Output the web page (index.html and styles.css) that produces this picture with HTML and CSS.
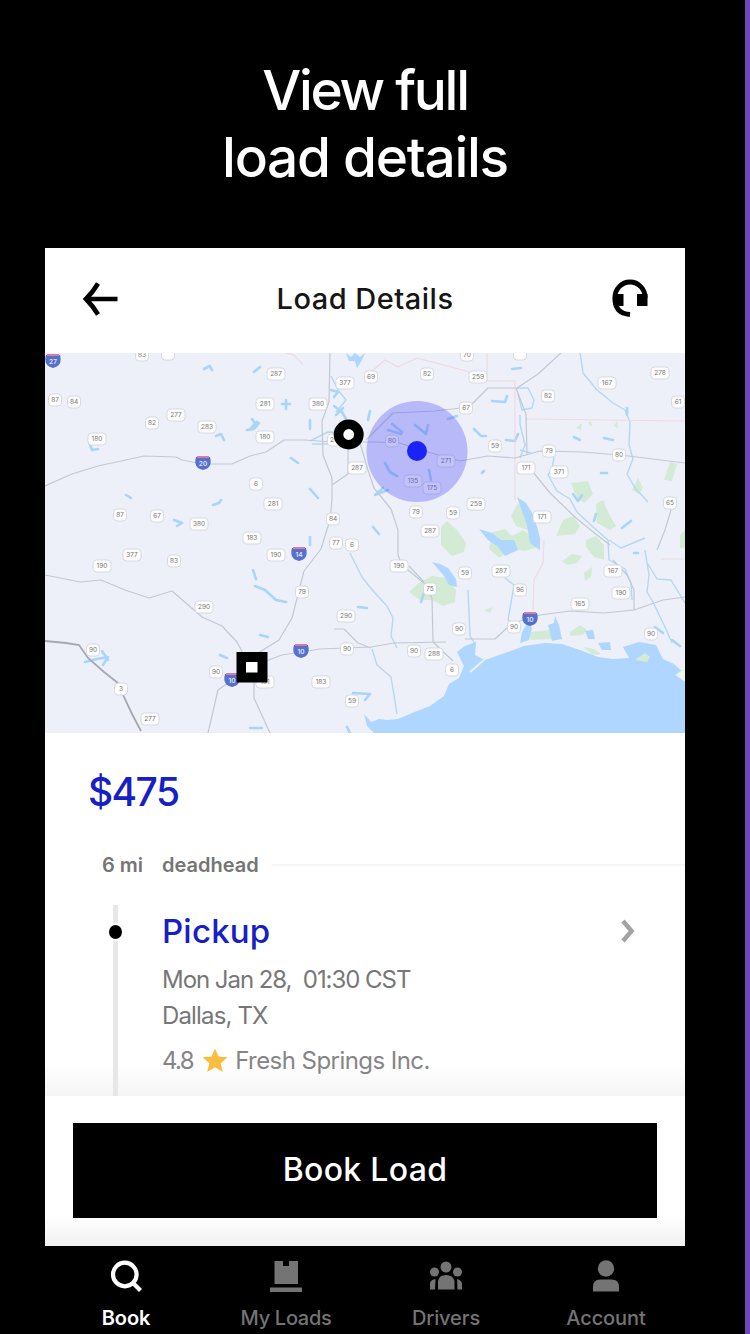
FILE: index.html
```
<!DOCTYPE html>
<html lang="en">
<head>
<meta charset="utf-8">
<title>Load Details</title>
<link rel="stylesheet" href="styles.css">
</head>
<body>
<div class="page">
  <h1 class="headline"><span class="headline-a">View full</span><br><span class="headline-b">load details</span></h1>

  <main class="card">
    <header class="topbar">
      <svg class="back" viewBox="0 0 36 34" width="36" height="34"><path d="M16 1.500Q11 10 4 17Q11 24 16 32.500M3 17H35.500" fill="none" stroke="#000" stroke-width="4.600"/></svg>
      <h2 class="title">Load Details</h2>
      <svg class="support" viewBox="0 0 36 40" width="36" height="40">
        <path d="M2.800 19A15.200 16 0 0 1 33.200 19M2.800 19Q2.800 34.500 18 35.500" fill="none" stroke="#000" stroke-width="4.800"/>
        <path d="M1 15H11.500V27H5Q1 24 1 15ZM25 15H35.500V27H25Z"/>
      </svg>
    </header>

    <svg class="map" viewBox="45 353 640 380" width="640" height="380">
      <rect x="45" y="352" width="640" height="381" fill="#edf0f9"/>
      <g fill="#d3ebd4">
        <path d="M441 527L447 521L458 531L466 543L464 552L452 556L441 545Z"/>
        <path d="M409 592L420 582L432 576L446 578L456 590L455 602L443 606L432 600L420 600Z"/>
        <path d="M517 505L522 501L530 520L528 530L516 526L511 516ZM492 532L505 529L512 536L523 530L538 540L538 547L525 551L512 549L499 558L489 549Z"/>
        <path d="M571 483L588 481L593 494L584 503L576 496ZM596 504L603 500L608 512L616 526L610 530L597 523ZM556 536L563 520L573 516L580 526L575 534ZM586 540L596 536L604 545L604 560L594 557L586 547Z"/>
        <path d="M562 561L572 554L582 556L577 563L567 565ZM584 573L592 567L591 577L585 581ZM664 480L670 462L677 464L672 481ZM632 490L638 478L643 488L639 494ZM680 535L685 530V548H680Z"/>
        <path d="M529 632L550 630L553 639L531 640ZM570 632L580 625L587 630L583 635L570 636ZM576 428L582 423L581 430ZM614 426L617 421L618 428ZM588 423L591 421L592 427ZM484 610L493 607L490 613Z"/>
      </g>
      <g fill="#aed6fe">
        <path d="M364 714L371 722L379 719L387 720L398 719L412 713L430 706L444 696L449 684L459 678L464 666L457 652L465 646L476 642L475 655L485 660L505 653L524 646L545 643L562 644L580 650L598 657L613 659L629 658L623 647L639 642L656 645L663 659L674 664L685 674V733H374L367 726Z"/>
        <path d="M517 497L526 503L534 516L540 538L540 550L530 543L527 525ZM479 529L492 533L501 540L514 540L518 550L505 556L497 546L488 540ZM432 562L440 564L448 568L456 579L457 587L449 585L444 576Z"/>
        <path d="M522 632L528 622L532 628L529 640L520 643ZM548 625L554 623L555 616L559 625L562 639L552 641ZM585 631L593 630L595 639L588 639ZM598 643L610 642L611 650L602 650ZM346 353L351 357L355 353L360 357L365 353L362 360L357 368L355 361L349 361Z"/>
      </g>
      <path d="M635 660L645 653L650 657L647 662ZM583 647L594 649L601 654L593 655Z" fill="#d3ebd4"/>
      <path d="M470 672L484 660M677 675L685 669L684 680Z" fill="#f0f4fb" stroke="#e9f4e4" stroke-width="2"/>
      <g class="lake">
        <path d="M204 369L210 366L212 370M254 372L260 367M247 430L254 429L259 423M216 436L221 434L224 440M90 445L92 450L98 449M126 495L131 498M213 505L219 503L221 500M174 520L182 523L177 526M252 419L257 426M286 400V409M282 404H290M251 428L257 422M331 390L338 392L334 397M334 406L342 412L346 419M336 415L343 408M370 411L368 420M310 420V429M291 458L298 463M310 489L318 498M373 527L379 534M310 537V545M253 570L256 579M255 586L265 590L276 600L286 602M260 635L268 637M358 607L367 608M388 430L401 434M392 424L402 432M415 425L426 434L428 425M385 463L390 472L397 476M429 470L431 480M383 488L375 495L388 490M448 419L457 416"/>
        <path d="M512 369L521 368M492 401L505 402L507 396M474 429L481 436L486 436M506 440L515 441L518 434M574 437L580 440M604 438L613 440M627 408V415M482 473L484 471M601 473H607M573 494L578 501L582 495M596 514L594 521M622 528L631 521M634 553H638M85 662L97 659L108 657L103 665M102 651L108 660M220 655L227 658M250 728H262M353 693L370 694L365 700M347 727L350 733M421 602L425 590M655 627L663 633M672 640L680 646"/>
      </g>
      <g class="river">
        <path d="M580 352L583 373L597 390L613 403L625 410L630 422L629 445L633 459L627 474L635 488L648 502M517 388L528 388L534 400L532 408L522 410L518 394M520 415L520 424L525 445L520 458M554 457L552 469L548 475L557 491L570 499L577 512L593 527L608 540L609 560M531 453L520 450M609 540L621 548L633 543L645 538M331 376L338 390L346 400L336 412M310 441L328 432L360 433M312 444H332"/>
        <path d="M350 553L362 577L374 592L387 606L393 618L391 636L397 648M372 649L377 665L391 677L394 695L397 714M505 578L514 585L508 620L519 626M468 590L470 636L475 644M609 560L625 569L631 583L632 600M645 550L649 575L647 592L653 602L665 627L672 643M648 564L657 579L671 580L685 603"/>
      </g>
      <g class="border">
        <path d="M365 377L385 360L398 367L417 358L440 364L466 371L487 381H515V500M487 352V381M526 419L685 421M544 540L543 563L534 580L533 610M661 559H685M282 352L294 355L303 365"/>
      </g>
      <g class="road">
        <path d="M45 486L72 474L98 466L121 461L144 456L176 457L182 460L203 464H232L250 456L266 452L284 440L305 440L330 442L376 442L400 443L417 449L460 461L488 456L515 458L540 451L582 452L620 455L685 463"/>
        <path d="M330 352L329 402L322 421L323 455L332 478V500L330 520L321 549L304 571L292 618L279 640L258 653M332 485L348 474L348 450M360 443L368 470L374 488L391 509L398 530V555L402 565L425 584L432 598L433 642L453 661M366 440L393 413L435 411L469 407L488 388L517 388L538 374L562 352M516 388L526 414L527 455M533 472L550 493L576 518L597 535L610 545"/>
        <path d="M45 575L80 582L101 580L125 590L149 598L172 591L202 617L222 626L237 642L247 661M258 664L282 655L320 649L345 648L371 647L394 643L446 642M465 639H495L509 626L520 621L540 615L570 611L604 613L634 610L663 600L685 597M334 629H344L358 643L371 648M218 690L208 733M218 690L228 683M254 682L254 698L270 733M409 566L424 582M613 560L627 575L634 590V610M671 510L665 530L657 550"/>
      </g>
      <path class="frontier" d="M45 641L66 643L79 645L88 658L104 672L118 683L124 697L132 714L141 731"/>
      <g id="shields"></g>
      <circle cx="417" cy="451.500" r="50.500" fill="#5254f7" fill-opacity=".35"/>
      <circle cx="417" cy="451" r="10" fill="#1b24f8"/>
      <circle cx="348.700" cy="434.500" r="10.200" fill="#fff" stroke="#000" stroke-width="9.600"/>
      <rect x="236.500" y="652" width="31" height="30.500"/>
      <rect x="246" y="662" width="11.500" height="10.500" fill="#fff"/>
    </svg>

    <section class="details">
      <p class="price"><span>$475</span></p>
      <p class="deadhead"><span class="miles">6 mi</span><span class="dh">deadhead</span><i class="rule"></i></p>
      <div class="stop">
        <div class="rail"><i class="dot"></i></div>
        <div class="info">
          <div class="stop-head"><h3 class="pickup">Pickup</h3>
            <svg width="15" height="24" viewBox="0 0 15 24"><path d="M2 2L10.500 12L2 22" fill="none" stroke="#a3a3a3" stroke-width="4.500"/></svg>
          </div>
          <p class="time">Mon Jan 28,&nbsp; 01:30 CST</p>
          <p class="city">Dallas, TX</p>
          <p class="rating"><span class="score">4.8</span><svg width="26" height="25" viewBox="0 0 26 25"><path d="M13 .5L16.500 8.500L25.500 9.300L18.700 15.200L20.800 24L13 19.300L5.200 24L7.300 15.200L.5 9.300L9.500 8.500Z" fill="#fabd42"/></svg><span class="company">Fresh Springs Inc.</span></p>
        </div>
      </div>
    </section>

    <footer class="action"><button class="book"><span>Book Load</span></button></footer>
  </main>

  <nav class="tabs">
    <a class="tab active"><svg width="34" height="34" viewBox="0 0 34 34"><circle cx="15.800" cy="15.500" r="11.800" fill="none" stroke="#fff" stroke-width="4.200"/><path d="M24 24L31.500 31.500" stroke="#fff" stroke-width="4.200"/></svg><span class="t1">Book</span></a>
    <a class="tab"><svg width="34" height="34" viewBox="0 0 34 34"><path d="M5.500 2H14V7H20V2H29V25H5.500ZM1 28.500H33V33H1Z" fill="#747474"/></svg><span class="t2">My Loads</span></a>
    <a class="tab"><svg width="34" height="34" viewBox="0 0 34 34"><g fill="#747474"><circle cx="17" cy="8" r="5.500"/><circle cx="5.500" cy="13" r="4.500"/><circle cx="28.500" cy="13" r="4.500"/><path d="M9 30.500V22Q10 16 17 16T25.500 22V30.500ZM1 30.500V24Q2 20.500 6.500 20L6 30.500ZM28 20Q32.500 21 33 24.500V30.500H28.500Z"/></g></svg><span class="t3">Drivers</span></a>
    <a class="tab"><svg width="34" height="34" viewBox="0 0 34 34"><g fill="#747474"><circle cx="17" cy="9.500" r="8.200"/><path d="M4 32.500V28Q4 20.500 11 20.500H23Q30 20.500 30 28V32.500Z"/></g></svg><span class="t4">Account</span></a>
  </nav>
</div>
<script src="map.js"></script>
</body>
</html>
```
FILE: styles.css
```
* { box-sizing: border-box; margin: 0; padding: 0; }
body { background: #000; font-family: Inter, "Liberation Sans", sans-serif; }
.page { width: 750px; height: 1334px; padding: 57px 60px 0 45px; border-right: 5px solid #7248b9; background: #000; overflow: hidden; display: flex; flex-direction: column; }
.headline { flex: 0 0 191px; text-align: center; color: #fff; font-weight: 500; font-size: 55px; line-height: 67px; white-space: nowrap; }
.headline-a { letter-spacing: -2.300px; }
.headline-b { letter-spacing: -1.300px; }
.card { flex: 0 0 998px; width: 640px; background: #fff; display: flex; flex-direction: column; }
.topbar { height: 105px; padding: 0 37px 3px; display: flex; align-items: center; justify-content: space-between; }
.title { font-size: 29px; font-weight: 500; line-height: 36px; letter-spacing: .5px; color: #161616; }
.map { display: block; flex: none; }
.lake { fill: none; stroke: #a8d5f8; stroke-width: 2.600; stroke-linejoin: round; stroke-linecap: round; }
.river { fill: none; stroke: #b3d8f2; stroke-width: 1.400; stroke-linejoin: round; }
.border { fill: none; stroke: #f0d8de; stroke-width: 1.100; }
.road { fill: none; stroke: #c2c8d3; stroke-width: 1.200; stroke-linejoin: round; }
.frontier { fill: none; stroke: #a6a8af; stroke-width: 1.800; }
.plate { fill: #fdfdfe; stroke: #d0d2d9; stroke-width: .8; }
.num { font: 6.500px Inter, sans-serif; fill: #777; text-anchor: middle; }
.inum { font: 600 6.500px Inter, sans-serif; fill: #dfe5ff; text-anchor: middle; }

.details { height: 363px; padding: 35px 0 0; display: flex; flex-direction: column; background: linear-gradient(#fff 91%, #f5f5f5); overflow: hidden; }
.price { padding-left: 43px; height: 48px; line-height: 48px; font-size: 39px; font-weight: 500; color: #1720c4; letter-spacing: -1.600px; }
.deadhead { margin-top: 37px; height: 24px; padding-left: 57px; display: flex; align-items: center; font-size: 20px; font-weight: 600; color: #757575; }
.miles { width: 60px; }
.rule { height: 2px; flex: 1; margin-left: 13px; background: #f6f6f6; }
.stop { margin-top: 28px; flex: 1; display: flex; padding-left: 62px; }
.rail { width: 17px; display: flex; justify-content: center; background: linear-gradient(90deg, transparent 6px, #e7e7e7 6px, #e7e7e7 11px, transparent 11px); }
.dot { width: 17px; height: 18px; margin-top: 18px; border-radius: 50%; background: #000; border: 2px solid #fff; }
.info { flex: 1; padding: 5px 49px 0 38px; color: #777; font-size: 24px; line-height: 36px; white-space: nowrap; }
.stop-head { display: flex; align-items: center; justify-content: space-between; height: 44px; margin-top: -1px; }
.pickup { color: #1720c4; font-size: 33px; line-height: 40px; font-weight: 500; letter-spacing: .2px; }
.time { margin-top: 9px; letter-spacing: -1.050px; }
.city { letter-spacing: -.850px; }
.score { letter-spacing: -1.600px; }
.company { letter-spacing: -.550px; }
.rating { margin-top: 9px; display: flex; align-items: center; color: #858585; }
.rating svg { margin: -2px 7px 0 9px; }
.action { flex: 1; padding: 27px 28px 0; background: linear-gradient(#fff 80%, #f1f1f1); }
.book { display: block; width: 584px; height: 95px; border: 0; background: #000; color: #fff; font: 500 32px/93px Inter, sans-serif; letter-spacing: .3px; padding-bottom: 2px; }
.tabs { flex: 1; display: flex; padding-left: 1px; }
.tab { flex: 0 0 160px; display: flex; flex-direction: column; align-items: center; padding-top: 13px; color: #747474; font-size: 20px; font-weight: 500; line-height: 26px; letter-spacing: -.1px; white-space: nowrap; }
.tab svg { flex: none; margin-bottom: 12px; }
.active { color: #fff; font-weight: 600; }
.t2 { letter-spacing: -.3px; }
```
FILE: map.js
```
// Route number plates: [x, y, number]
const plates = [
  [142,355,"83"],[168,354,""],[55,400,"87"],[74,402,"84"],[152,423,"82"],[176,415,"277"],[207,427,"283"],[97,439,"180"],
  [120,515,"87"],[157,516,"67"],[199,524,"380"],[252,538,"183"],[276,374,"287"],[265,404,"281"],[318,404,"380"],[345,383,"377"],
  [371,377,"69"],[427,374,"82"],[466,408,"67"],[478,377,"259"],[265,437,"180"],[334,440,"20"],[357,468,"287"],[392,441,"80"],
  [446,461,"271"],[413,481,"135"],[432,488,"175"],[416,512,"79"],[453,513,"59"],[430,531,"287"],[256,484,"6"],[273,504,"281"],
  [333,519,"84"],[336,543,"77"],[352,545,"6"],[607,383,"167"],[660,373,"278"],[548,396,"82"],[495,446,"59"],[549,451,"79"],
  [619,455,"80"],[526,468,"171"],[559,472,"371"],[476,504,"259"],[542,517,"171"],[670,503,"65"],[678,402,"61"],[467,355,"70"],
  [520,354,""],[102,566,"190"],[132,555,"377"],[174,561,"83"],[204,607,"290"],[93,650,"90"],[121,689,"3"],[150,719,"277"],
  [216,672,"90"],[276,555,"190"],[302,592,"79"],[346,616,"290"],[347,649,"90"],[321,682,"183"],[352,701,"59"],[265,682,"181"],
  [399,566,"190"],[430,589,"75"],[459,629,"90"],[414,651,"90"],[434,654,"288"],[452,670,"6"],[465,573,"59"],[501,571,"287"],
  [520,590,"96"],[514,627,"90"],[613,571,"167"],[621,593,"190"],[580,604,"165"],[651,634,"90"]
];
// Interstate shields
const interstates = [[53,361,"27"],[203,463,"20"],[299,554,"14"],[301,651,"10"],[530,619,"10"],[232,680,"10"]];

let out = "";
for (const [x, y, n] of plates) {
  const w = n.length > 2 ? 18 : 13;
  out += `<rect class="plate" x="${x - w / 2}" y="${y - 6}" width="${w}" height="12" rx="3.500"/><text class="num" x="${x}" y="${y + 2}">${n}</text>`;
}
for (const [x, y, n] of interstates) {
  out += `<path d="M${x - 7} ${y - 6}H${x + 7}Q${x + 10} ${y + 5} ${x} ${y + 7}Q${x - 10} ${y + 5} ${x - 7} ${y - 6}Z" fill="#5870c9"/><path d="M${x - 6} ${y - 6}H${x + 6}" stroke="#d77ca5" stroke-width="2"/><text class="inum" x="${x}" y="${y + 3}">${n}</text>`;
}
document.getElementById("shields").innerHTML = out;
```
